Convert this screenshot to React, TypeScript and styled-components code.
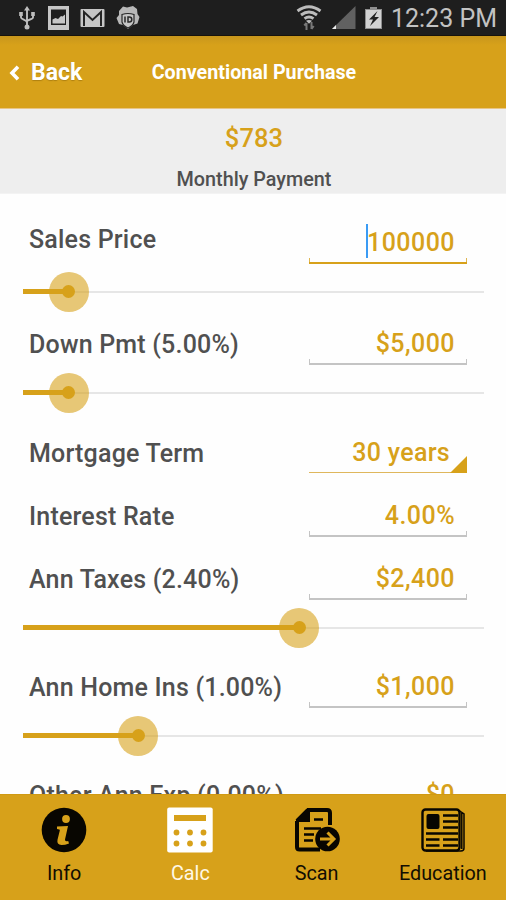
import React from 'react';
import styled, { createGlobalStyle } from 'styled-components';

const GOLD = '#d7a11a';

const GlobalStyle = createGlobalStyle`
  * { box-sizing: border-box; }
  body { margin: 0; background: #fff; font-family: Roboto, "Liberation Sans", sans-serif; }
`;

const Screen = styled.div`
  width: 506px;
  height: 900px;
  display: flex;
  flex-direction: column;
  overflow: hidden;
  background: #fefefe;
`;

const StatusBar = styled.div`
  flex: none;
  height: 36px;
  display: flex;
  align-items: center;
  justify-content: space-between;
  padding: 0 9px 0 18px;
  background: #1e1e1e;
  border-bottom: 1px solid #17130c;
`;

const StatusGroup = styled.div<{ $gap: number }>`
  display: flex;
  align-items: center;
  gap: ${p => p.$gap}px;
  svg { display: block; }
`;

const Clock = styled.span`
  font-size: 25px;
  line-height: 33px;
  padding-top: 2px;
  color: #c2c2c2;
  white-space: nowrap;
`;

const Header = styled.header`
  flex: none;
  height: 73px;
  display: grid;
  grid-template-columns: 100px 1fr 98px;
  align-items: center;
  background: linear-gradient(#c8961c, ${GOLD} 9px);
  border-bottom: 1px solid #e8c585;
  color: #fff;
`;

const BackButton = styled.div`
  display: flex;
  align-items: center;
  gap: 11px;
  padding: 1px 0 0 9px;
  font-size: 23px;
  font-weight: 700;
  line-height: 30px;
  text-shadow: 0 1px 1px rgba(100, 70, 0, 0.35);
`;

const Title = styled.h1`
  margin: 0;
  padding-top: 2px;
  text-align: center;
  font-size: 19.7px;
  line-height: 28px;
  font-weight: 700;
  white-space: nowrap;
`;

const Summary = styled.section`
  flex: none;
  height: 85px;
  padding: 13px 0 0 2px;
  display: flex;
  flex-direction: column;
  align-items: center;
  background: #eee;
  border-bottom: 1px solid #f3f3f3;
`;

const Payment = styled.div`
  font-size: 25.5px;
  line-height: 32px;
  font-weight: 500;
  letter-spacing: 0.1px;
  color: ${GOLD};
`;

const PaymentLabel = styled.div`
  margin-top: 13px;
  font-size: 19.8px;
  line-height: 26px;
  font-weight: 500;
  color: #505050;
`;

const Form = styled.main`
  flex: 1;
  min-height: 0;
  overflow: hidden;
  padding-top: 15px;
`;

const Row = styled.div`
  height: 63px;
  display: flex;
  justify-content: space-between;
  padding: 0 39px 0 29px;
`;

const Label = styled.div<{ $lift?: number }>`
  padding-top: ${p => 17 - (p.$lift ?? 0)}px;
  font-size: 25px;
  line-height: 32px;
  font-weight: 500;
  letter-spacing: 0.2px;
  color: #505050;
  white-space: nowrap;
`;

const Field = styled.div<{ $active?: boolean; $drop?: number }>`
  position: relative;
  width: 158px;
  height: ${p => 53 + (p.$drop ?? 0)}px;
  padding: ${p => 16 + (p.$drop ?? 0)}px 12px 0 0;
  text-align: right;
  font-size: 25px;
  line-height: 32px;
  font-weight: 500;
  letter-spacing: 0.45px;
  color: ${GOLD};
  border-bottom: 2px solid ${p => (p.$active ? GOLD : '#c4c4c4')};
  &::after {
    content: '';
    position: absolute;
    left: 0;
    right: 0;
    bottom: 0;
    height: 4px;
    border: solid ${p => (p.$active ? '#dfb550' : '#c4c4c4')};
    border-width: 0 1px;
  }
`;

const Caret = styled.i`
  position: absolute;
  left: 57px;
  top: 15px;
  width: 2px;
  height: 34px;
  background: #3a9bf4;
`;

const Picker = styled.div`
  position: relative;
  width: 158px;
  height: 52px;
  padding: 16px 17px 0 0;
  text-align: right;
  font-size: 25px;
  line-height: 32px;
  font-weight: 500;
  letter-spacing: 0.3px;
  color: ${GOLD};
  border-bottom: 1px solid #dfb75c;
  &::after {
    content: '';
    position: absolute;
    right: 0;
    bottom: -1px;
    width: 17px;
    height: 17px;
    background: ${GOLD};
    clip-path: polygon(100% 0, 100% 100%, 0 100%);
  }
`;

const SliderBox = styled.div<{ $height: number }>`
  height: ${p => p.$height}px;
  padding: ${p => (p.$height === 40 ? 19 : 17)}px 22px 0 23px;
`;

const Track = styled.div`
  position: relative;
  height: 2px;
  background: #e6e6e6;
`;

const Fill = styled.div`
  position: absolute;
  left: 0;
  top: -2px;
  height: 5px;
  background: ${GOLD};
`;

const Thumb = styled.div`
  position: absolute;
  top: -19.5px;
  width: 40px;
  height: 40px;
  margin-left: -20px;
  border-radius: 50%;
  background: rgba(215, 161, 26, 0.6);
  &::after {
    content: '';
    position: absolute;
    inset: 13.5px;
    border-radius: 50%;
    background: ${GOLD};
  }
`;

const TabBar = styled.nav`
  flex: none;
  height: 106px;
  display: grid;
  grid-template-columns: repeat(4, 1fr);
  padding-left: 1px;
  background: ${GOLD};
  border-top: 1px solid #d09a13;
`;

const Tab = styled.div<{ $active?: boolean }>`
  display: flex;
  flex-direction: column;
  align-items: center;
  padding-top: 12px;
  font-size: 19.8px;
  line-height: 26px;
  color: ${p => (p.$active ? '#fff8e6' : '#120d02')};
  svg { display: block; margin-bottom: 8px; }
`;

const UsbIcon = () => (
  <svg width="18" height="26" viewBox="0 0 18 26" fill="none" stroke="#bdbdbd" strokeWidth="1.9">
    <path d="M9 4v18M3 9v3.500c0 2 6 2.500 6 5M15 9v3.500c0 2-6 2-6 4" />
    <path d="M9 1l3 4.500H6zM1.200 7h3.600v4H1.200zM13.200 7h3.600v4h-3.600z" fill="#bdbdbd" stroke="none" />
    <circle cx="9" cy="22" r="2.500" fill="#bdbdbd" stroke="none" />
  </svg>
);

const PhotoIcon = () => (
  <svg width="23" height="26" viewBox="0 0 23 26">
    <path fillRule="evenodd" fill="#c6c6c6" d="M1 1h21v24H1zM4 4.500v15.500h15V4.500z" />
    <path fill="#c6c6c6" d="M5.500 18.500v-4l3-1.500 2.500 1 3-3 1.500.5L18 9.500v9z" />
  </svg>
);

const MailIcon = () => (
  <svg width="25" height="20" viewBox="0 0 25 20">
    <rect x=".5" y="1" width="24" height="18" rx="1" fill="#c6c6c6" />
    <path d="M4 18V4l8.500 8L21 4v14" fill="none" stroke="#252525" strokeWidth="2" />
  </svg>
);

const IdIcon = () => (
  <svg width="24" height="26" viewBox="0 0 24 26">
    <path d="M3 6l4-4.500 4 1 6-1.500 4 3 .5 5 2 3-2 6.500-4.500 1.500-5 4-5-4-4-1L.5 13 3 10z" fill="#b8b8b8" />
    <path d="M6 9.500q6-2 12 0V17q-1 4-6 6-5-2-6-6z" fill="#c6c6c6" stroke="#292929" strokeWidth="1.200" />
    <path d="M9 11.500v6M12 12v5h1.300q2.500 0 2.500-2.500t-2.500-2.500z" fill="none" stroke="#292929" strokeWidth="1.500" />
  </svg>
);

const WifiIcon = () => (
  <svg width="26" height="26" viewBox="0 0 26 26" fill="none" stroke="#bcbcbc" strokeWidth="2.900">
    <path d="M1.500 6q11.500-8.500 23 0M5 10q8-6 16 0M8.500 13.700q4.500-3.300 9 0" />
    <path d="M10 15.800q3-1.800 6 0l-3 3z" fill="#bcbcbc" stroke="none" />
    <path d="M10.500 25v-7M8.300 20.500l2.200-2.500M15.500 17v7M17.700 21l-2.200 3" stroke="#777" strokeWidth="2" />
  </svg>
);

const SignalIcon = () => (
  <svg width="25" height="25" viewBox="0 0 25 25">
    <path d="M24.500 1v23H1z" fill="#616161" />
    <path d="M5 20v4H1z" fill="#eee" />
  </svg>
);

const BatteryIcon = () => (
  <svg width="17" height="24" viewBox="0 0 17 24">
    <path d="M5 1h7v2h5v20H0V3h5z" fill="#8e8e8e" />
    <path d="M1 4h15v18H1z" fill="#d2d2d2" />
    <path d="M12.500 5L4 13.500h4L5 20l9-9H9.500z" fill="#202020" />
  </svg>
);

const BackIcon = () => (
  <svg width="11" height="16" viewBox="0 0 11 16">
    <path d="M9 1.800L3 8l6 6.200" fill="none" stroke="#fff" strokeWidth="3.600" />
  </svg>
);

const InfoIcon = () => (
  <svg width="46" height="46" viewBox="0 0 46 46">
    <circle cx="23" cy="23" r="22.300" fill="#080601" />
    <circle cx="25" cy="12" r="3.900" fill={GOLD} />
    <path d="M16 19.500l11-.5-3 13.500q-.3 2.500 3.200 1.500l.8 2.500q-4 1.500-7.500 1.500-5-.3-4-5.300l2.300-9.200q.2-1.500-2.800-1.500z" fill={GOLD} />
  </svg>
);

const CalcIcon = () => (
  <svg width="46" height="46" viewBox="0 0 46 46">
    <rect x=".2" y=".5" width="45.500" height="45" rx="2" fill="#fff" />
    <path d="M7 8h32v6H7z" fill={GOLD} />
    {[9.5, 23, 36.5].map(x => [25.5, 36.5].map(y => <circle key={`${x}-${y}`} cx={x} cy={y} r="2.900" fill={GOLD} />))}
  </svg>
);

const ScanIcon = () => (
  <svg width="46" height="46" viewBox="0 0 46 46">
    <path d="M13 3h20q3 0 3 3v12M3 14v26q0 2.500 2.500 2.500H26M3 14L14 3" fill="none" stroke="#080601" strokeWidth="4" strokeLinejoin="round" />
    <path d="M2 13L13 2h3v13H2z" fill="#080601" />
    <path d="M20 12.500h9M10 21.500h17M10 27.500h10M10 33.500h9" stroke="#080601" strokeWidth="2.600" />
    <circle cx="33.500" cy="32" r="12.300" fill="#080601" />
    <path d="M26 32h13M33.500 25.500L40 32l-6.500 6.500" fill="none" stroke={GOLD} strokeWidth="3" />
  </svg>
);

const NewsIcon = () => (
  <svg width="46" height="46" viewBox="0 0 46 46" fill="none" stroke="#080601">
    <rect x="2.500" y="2.500" width="37" height="41" rx="3" strokeWidth="2.400" />
    <path d="M39 3.500l5 3.500v34q0 3-3 3H6M41.800 6v36" strokeWidth="1.500" />
    <rect x="6.500" y="7" width="13" height="15" rx="2" fill="#080601" stroke="none" />
    <path d="M23 8.500h15M23 14.500h15M23 20.500h15M6 26.500h32M6 32.500h13.500M23 32.500h15M6 38.500h13.500M23 38.500h15" strokeWidth="2.500" />
  </svg>
);

const Slider = ({ value, height = 46 }: { value: number; height?: number }) => (
  <SliderBox $height={height}>
    <Track>
      <Fill style={{ width: `${value}%` }} />
      <Thumb style={{ left: `${value}%` }} />
    </Track>
  </SliderBox>
);

export default function App() {
  return (
    <>
      <GlobalStyle />
      <Screen>
        <StatusBar>
          <StatusGroup $gap={10.5}>
            <UsbIcon />
            <PhotoIcon />
            <MailIcon />
            <IdIcon />
          </StatusGroup>
          <StatusGroup $gap={9}>
            <WifiIcon />
            <SignalIcon />
            <BatteryIcon />
            <Clock>12:23 PM</Clock>
          </StatusGroup>
        </StatusBar>
        <Header>
          <BackButton><BackIcon />Back</BackButton>
          <Title>Conventional Purchase</Title>
        </Header>
        <Summary>
          <Payment>$783</Payment>
          <PaymentLabel>Monthly Payment</PaymentLabel>
        </Summary>
        <Form>
          <Row>
            <Label $lift={2}>Sales Price</Label>
            <Field $active $drop={2}><Caret />100000</Field>
          </Row>
          <Slider value={9.9} height={40} />
          <Row><Label>Down Pmt (5.00%)</Label><Field>$5,000</Field></Row>
          <Slider value={9.9} />
          <Row><Label>Mortgage Term</Label><Picker>30 years</Picker></Row>
          <Row><Label>Interest Rate</Label><Field>4.00%</Field></Row>
          <Row><Label>Ann Taxes (2.40%)</Label><Field>$2,400</Field></Row>
          <Slider value={59.9} height={45} />
          <Row><Label>Ann Home Ins (1.00%)</Label><Field>$1,000</Field></Row>
          <Slider value={25} height={45} />
          <Row><Label>Other Ann Exp (0.00%)</Label><Field>$0</Field></Row>
        </Form>
        <TabBar>
          <Tab><InfoIcon />Info</Tab>
          <Tab $active><CalcIcon />Calc</Tab>
          <Tab><ScanIcon />Scan</Tab>
          <Tab><NewsIcon />Education</Tab>
        </TabBar>
      </Screen>
    </>
  );
}
